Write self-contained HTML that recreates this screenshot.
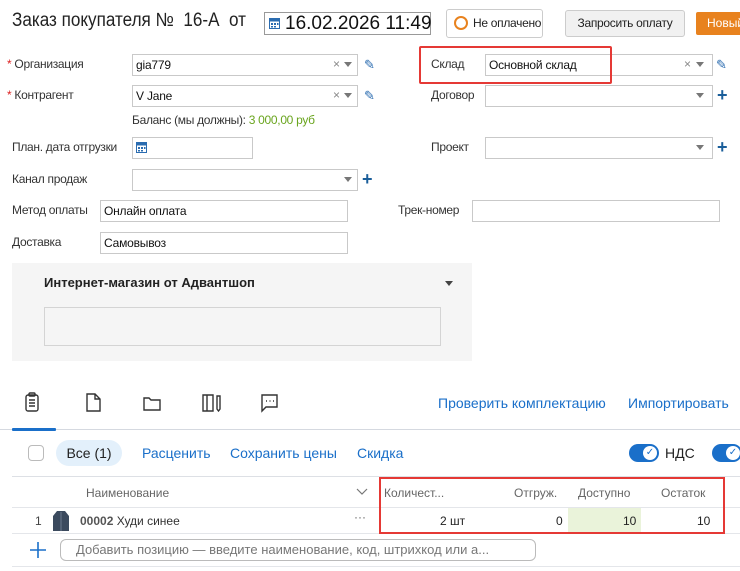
<!DOCTYPE html>
<html><head><meta charset="utf-8"><style>
*{box-sizing:border-box;margin:0;padding:0}
body{width:740px;height:571px;overflow:hidden;background:#fff;font-family:"Liberation Sans",sans-serif;color:#222;position:relative}
.a{position:absolute;white-space:nowrap}
.l{font-size:12px;letter-spacing:-0.3px;color:#333}
.in{position:absolute;border:1px solid #c9c9c9;background:#fff;height:22px;font-size:12px;padding:3px 3px;letter-spacing:-0.2px;color:#111}
.x{position:absolute;color:#888;font-size:12px}
.ar{position:absolute;width:0;height:0;border-left:4px solid transparent;border-right:4px solid transparent;border-top:5px solid #777}
.pl{position:absolute;color:#1a5e9a;font-size:18px;font-weight:bold;line-height:14px}
.req{color:#d22}
.lk{color:#1a6fc9;font-size:14px}
.gr{color:#666;font-size:12px}
</style></head><body>
<div class="a" style="left:12px;top:10px;font-size:19px;color:#222;transform:scaleX(0.9);transform-origin:0 0">Заказ покупателя №&nbsp; 16-А &nbsp;от</div>
<div class="a" style="left:264px;top:12px;width:167px;height:23px;border:1px solid #999;font-size:19px;padding-left:20px;line-height:21px;color:#111;background:#fff">16.02.2026 11:49</div>
<svg class="a" style="left:269px;top:17px" width="11" height="12"><rect x="0.5" y="1.5" width="10" height="10" fill="#fff" stroke="#2b6cb0"/><rect x="0.5" y="1.5" width="10" height="3" fill="#2b6cb0"/><g fill="#2b6cb0"><rect x="2" y="6" width="2" height="2"/><rect x="5" y="6" width="2" height="2"/><rect x="8" y="6" width="1.5" height="2"/><rect x="2" y="9" width="2" height="1.5"/><rect x="5" y="9" width="2" height="1.5"/></g></svg>
<div class="a" style="left:446px;top:9px;width:97px;height:29px;border:1px solid #ccc;border-radius:3px;font-size:12px;line-height:27px;padding-left:26px;letter-spacing:-0.3px">Не оплачено</div>
<div class="a" style="left:454px;top:16px;width:14px;height:14px;border:2px solid #e8821e;border-radius:50%"></div>
<div class="a" style="left:565px;top:10px;width:120px;height:27px;border:1px solid #ccc;border-radius:3px;background:#f1f1f1;font-size:12px;line-height:25px;text-align:center;letter-spacing:-0.3px">Запросить оплату</div>
<div class="a" style="left:696px;top:12px;width:50px;height:23px;background:#e8821e;border-radius:2px;color:#fff;font-size:12px;line-height:23px;padding-left:11px">Новый</div>

<div class="a l" style="left:7px;top:57px"><span class="req">*</span> Организация</div>
<div class="in" style="left:132px;top:54px;width:226px">gia779</div><span class="x" style="left:333px;top:57px">×</span><div class="ar" style="left:344px;top:62px"></div>
<div class="a" style="left:364px;top:57px;color:#2b6cb0;font-size:13px">✎</div>
<div class="a l" style="left:7px;top:88px"><span class="req">*</span> Контрагент</div>
<div class="in" style="left:132px;top:85px;width:226px">V Jane</div><span class="x" style="left:333px;top:88px">×</span><div class="ar" style="left:344px;top:93px"></div>
<div class="a" style="left:364px;top:88px;color:#2b6cb0;font-size:13px">✎</div>
<div class="a l" style="left:132px;top:113px">Баланс (мы должны): <span style="color:#6aa51f">3 000,00 руб</span></div>

<div class="a l" style="left:431px;top:57px">Склад</div>
<div class="in" style="left:485px;top:54px;width:228px">Основной склад</div><span class="x" style="left:684px;top:57px">×</span><div class="ar" style="left:696px;top:62px"></div>
<div class="a" style="left:716px;top:57px;color:#2b6cb0;font-size:13px">✎</div>
<div class="a" style="left:419px;top:46px;width:193px;height:38px;border:2px solid #e53935;border-radius:2px"></div>
<div class="a l" style="left:431px;top:88px">Договор</div>
<div class="in" style="left:485px;top:85px;width:228px"></div><div class="ar" style="left:696px;top:93px"></div><div class="pl" style="left:717px;top:88px">+</div>

<div class="a l" style="left:12px;top:140px">План. дата отгрузки</div>
<div class="in" style="left:132px;top:137px;width:121px"></div>
<svg class="a" style="left:136px;top:141px" width="11" height="12"><rect x="0.5" y="1.5" width="10" height="10" fill="#fff" stroke="#2b6cb0"/><rect x="0.5" y="1.5" width="10" height="3" fill="#2b6cb0"/><g fill="#2b6cb0"><rect x="2" y="6" width="2" height="2"/><rect x="5" y="6" width="2" height="2"/><rect x="8" y="6" width="1.5" height="2"/><rect x="2" y="9" width="2" height="1.5"/><rect x="5" y="9" width="2" height="1.5"/></g></svg>
<div class="a l" style="left:431px;top:140px">Проект</div>
<div class="in" style="left:485px;top:137px;width:228px"></div><div class="ar" style="left:696px;top:145px"></div><div class="pl" style="left:717px;top:140px">+</div>

<div class="a l" style="left:12px;top:172px">Канал продаж</div>
<div class="in" style="left:132px;top:169px;width:226px"></div><div class="ar" style="left:344px;top:177px"></div><div class="pl" style="left:362px;top:172px">+</div>

<div class="a l" style="left:12px;top:203px">Метод оплаты</div>
<div class="in" style="left:100px;top:200px;width:248px">Онлайн оплата</div>
<div class="a l" style="left:398px;top:203px">Трек-номер</div>
<div class="in" style="left:472px;top:200px;width:248px"></div>
<div class="a l" style="left:12px;top:235px">Доставка</div>
<div class="in" style="left:100px;top:232px;width:248px">Самовывоз</div>

<div class="a" style="left:12px;top:263px;width:460px;height:98px;background:#f5f5f5"></div>
<div class="a" style="left:44px;top:275px;font-size:13px;font-weight:bold;color:#222">Интернет-магазин от Адвантшоп</div>
<div class="ar" style="left:445px;top:281px;border-top-color:#444"></div>
<div class="a" style="left:44px;top:307px;width:397px;height:39px;border:1px solid #d4d4d4;background:#f5f5f5"></div>

<svg class="a" style="left:20px;top:390px" width="270" height="26" fill="none" stroke="#333" stroke-width="1.4">
<rect x="6" y="5" width="12" height="16" rx="2"/><rect x="9" y="3" width="6" height="3" rx="1"/><path d="M9 10h6M9 13h6M9 16h6"/>
<path d="M67 4h8l5 5v12H67z M75 4v5h5"/>
<path d="M124 8h5l2 2h9v10h-16z"/>
<path d="M183 5h10v16h-10z M187 5v16 M197 6h3v13l-1.5 2-1.5-2z"/>
<path d="M242 5h15v12h-11l-4 4z"/><path d="M246 11h1M249.5 11h1M253 11h1" stroke-width="1.6"/>
</svg>
<div class="a lk" style="left:438px;top:395px">Проверить комплектацию</div>
<div class="a lk" style="left:628px;top:395px">Импортировать</div>
<div class="a" style="left:0;top:429px;width:740px;height:1px;background:#d5d9e0"></div>
<div class="a" style="left:12px;top:428px;width:44px;height:3px;background:#1a6fc9;border-radius:1px"></div>

<div class="a" style="left:28px;top:445px;width:16px;height:16px;border:1px solid #bbb;border-radius:4px"></div>
<div class="a" style="left:56px;top:440px;width:66px;height:26px;background:#e3f0fb;border-radius:13px;font-size:14px;line-height:26px;text-align:center">Все (1)</div>
<div class="a lk" style="left:142px;top:445px">Расценить</div>
<div class="a lk" style="left:230px;top:445px">Сохранить цены</div>
<div class="a lk" style="left:357px;top:445px">Скидка</div>
<div class="a" style="left:629px;top:444px;width:30px;height:18px;border-radius:9px;background:#1a6fc9"></div>
<div class="a" style="left:643px;top:446px;width:14px;height:14px;border-radius:50%;background:#fff;font-size:10px;color:#1a6fc9;text-align:center;line-height:14px">✓</div>
<div class="a" style="left:665px;top:445px;font-size:14px">НДС</div>
<div class="a" style="left:712px;top:444px;width:30px;height:18px;border-radius:9px;background:#1a6fc9"></div>
<div class="a" style="left:726px;top:446px;width:14px;height:14px;border-radius:50%;background:#fff;font-size:10px;color:#1a6fc9;text-align:center;line-height:14px">✓</div>

<div class="a" style="left:12px;top:476px;width:728px;height:1px;background:#dde0e5"></div>
<div class="a gr" style="left:86px;top:486px">Наименование</div>
<svg class="a" style="left:356px;top:488px" width="12" height="8"><path d="M1 1l5 5 5-5" fill="none" stroke="#777" stroke-width="1.2"/></svg>
<div class="a gr" style="left:384px;top:486px">Количест...</div>
<div class="a gr" style="left:514px;top:486px">Отгруж.</div>
<div class="a gr" style="left:578px;top:486px">Доступно</div>
<div class="a gr" style="left:661px;top:486px">Остаток</div>
<div class="a" style="left:12px;top:507px;width:728px;height:1px;background:#e4e6ea"></div>
<div class="a" style="left:568px;top:508px;width:73px;height:25px;background:#eaf3da"></div>
<div class="a" style="left:35px;top:514px;font-size:12px;color:#444">1</div>
<svg class="a" style="left:51px;top:509px" width="20" height="23"><path d="M6 2h8l4 5v15H2V7z" fill="#3b4a5e"/><path d="M10 3v19" stroke="#6b7a8e"/></svg>
<div class="a" style="left:80px;top:514px;font-size:12px;color:#333"><b style="color:#555">00002</b> Худи синее</div>
<div class="a" style="left:354px;top:510px;font-size:12px;color:#666">···</div>
<div class="a" style="left:440px;top:514px;font-size:12px">2 шт</div>
<div class="a" style="left:556px;top:514px;font-size:12px">0</div>
<div class="a" style="left:623px;top:514px;font-size:12px">10</div>
<div class="a" style="left:697px;top:514px;font-size:12px">10</div>
<div class="a" style="left:12px;top:533px;width:728px;height:1px;background:#e4e6ea"></div>
<div class="a" style="left:379px;top:477px;width:346px;height:57px;border:2px solid #e53935"></div>

<svg class="a" style="left:29px;top:541px" width="18" height="18"><path d="M9 1v16M1 9h16" stroke="#1a6fc9" stroke-width="1.6"/></svg>
<div class="a" style="left:60px;top:539px;width:476px;height:22px;border:1px solid #bbb;border-radius:6px;font-size:13px;color:#777;padding:2px 0 0 15px">Добавить позицию — введите наименование, код, штрихкод или а...</div>
<div class="a" style="left:12px;top:566px;width:728px;height:1px;background:#e4e6ea"></div>
</body></html>
